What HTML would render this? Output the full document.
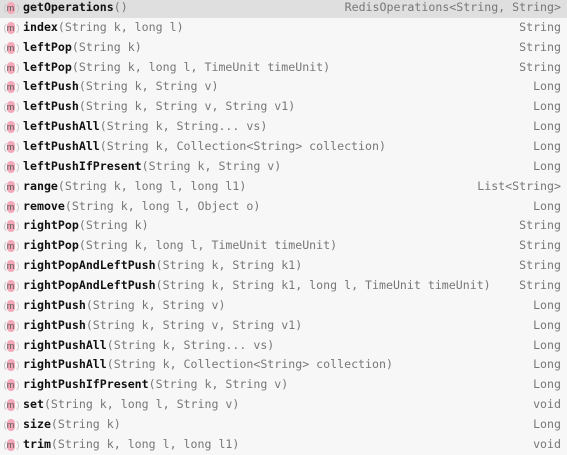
<!DOCTYPE html>
<html><head><style>
html,body{margin:0;padding:0;}
body{width:567px;height:454px;overflow:hidden;background:#f7f7f7;position:relative;font-family:"DejaVu Sans Mono","Liberation Mono",monospace;font-size:11.6px;}
.r{position:absolute;left:0;width:567px;height:19.86px;line-height:19.86px;white-space:pre;}
.r.sel{background:#dfdfdf;}
.ic{position:absolute;left:3px;top:4px;width:15px;height:12px;}
.ic .p{position:absolute;left:4px;top:0;width:8px;height:12px;border-radius:5px;background:#f4a9b9;}
.ic .b{position:absolute;left:1px;top:0;width:13px;height:11px;border:1px solid #c8c8c8;border-top-color:transparent;border-bottom-color:transparent;border-radius:7px;}
.ic .m{position:absolute;left:0;width:15px;top:0;text-align:center;font-size:9px;line-height:12px;color:#555;font-family:"Liberation Sans",sans-serif;}
.n{position:absolute;left:23px;top:0;color:#777;}
.n b{color:#111;font-weight:bold;}
.t{position:absolute;right:6px;top:0;color:#777;}
</style></head><body>
<div class="r sel" style="top:-2px"><div class="ic"><div class="b"></div><div class="p"></div><div class="m">m</div></div><span class="n"><b>getOperations</b>()</span><span class="t">RedisOperations&lt;String, String&gt;</span></div>
<div class="r" style="top:17.86px"><div class="ic"><div class="b"></div><div class="p"></div><div class="m">m</div></div><span class="n"><b>index</b>(String k, long l)</span><span class="t">String</span></div>
<div class="r" style="top:37.72px"><div class="ic"><div class="b"></div><div class="p"></div><div class="m">m</div></div><span class="n"><b>leftPop</b>(String k)</span><span class="t">String</span></div>
<div class="r" style="top:57.58px"><div class="ic"><div class="b"></div><div class="p"></div><div class="m">m</div></div><span class="n"><b>leftPop</b>(String k, long l, TimeUnit timeUnit)</span><span class="t">String</span></div>
<div class="r" style="top:77.44px"><div class="ic"><div class="b"></div><div class="p"></div><div class="m">m</div></div><span class="n"><b>leftPush</b>(String k, String v)</span><span class="t">Long</span></div>
<div class="r" style="top:97.3px"><div class="ic"><div class="b"></div><div class="p"></div><div class="m">m</div></div><span class="n"><b>leftPush</b>(String k, String v, String v1)</span><span class="t">Long</span></div>
<div class="r" style="top:117.16px"><div class="ic"><div class="b"></div><div class="p"></div><div class="m">m</div></div><span class="n"><b>leftPushAll</b>(String k, String... vs)</span><span class="t">Long</span></div>
<div class="r" style="top:137.02px"><div class="ic"><div class="b"></div><div class="p"></div><div class="m">m</div></div><span class="n"><b>leftPushAll</b>(String k, Collection&lt;String&gt; collection)</span><span class="t">Long</span></div>
<div class="r" style="top:156.88px"><div class="ic"><div class="b"></div><div class="p"></div><div class="m">m</div></div><span class="n"><b>leftPushIfPresent</b>(String k, String v)</span><span class="t">Long</span></div>
<div class="r" style="top:176.74px"><div class="ic"><div class="b"></div><div class="p"></div><div class="m">m</div></div><span class="n"><b>range</b>(String k, long l, long l1)</span><span class="t">List&lt;String&gt;</span></div>
<div class="r" style="top:196.6px"><div class="ic"><div class="b"></div><div class="p"></div><div class="m">m</div></div><span class="n"><b>remove</b>(String k, long l, Object o)</span><span class="t">Long</span></div>
<div class="r" style="top:216.46px"><div class="ic"><div class="b"></div><div class="p"></div><div class="m">m</div></div><span class="n"><b>rightPop</b>(String k)</span><span class="t">String</span></div>
<div class="r" style="top:236.32px"><div class="ic"><div class="b"></div><div class="p"></div><div class="m">m</div></div><span class="n"><b>rightPop</b>(String k, long l, TimeUnit timeUnit)</span><span class="t">String</span></div>
<div class="r" style="top:256.18px"><div class="ic"><div class="b"></div><div class="p"></div><div class="m">m</div></div><span class="n"><b>rightPopAndLeftPush</b>(String k, String k1)</span><span class="t">String</span></div>
<div class="r" style="top:276.04px"><div class="ic"><div class="b"></div><div class="p"></div><div class="m">m</div></div><span class="n"><b>rightPopAndLeftPush</b>(String k, String k1, long l, TimeUnit timeUnit)</span><span class="t">String</span></div>
<div class="r" style="top:295.9px"><div class="ic"><div class="b"></div><div class="p"></div><div class="m">m</div></div><span class="n"><b>rightPush</b>(String k, String v)</span><span class="t">Long</span></div>
<div class="r" style="top:315.76px"><div class="ic"><div class="b"></div><div class="p"></div><div class="m">m</div></div><span class="n"><b>rightPush</b>(String k, String v, String v1)</span><span class="t">Long</span></div>
<div class="r" style="top:335.62px"><div class="ic"><div class="b"></div><div class="p"></div><div class="m">m</div></div><span class="n"><b>rightPushAll</b>(String k, String... vs)</span><span class="t">Long</span></div>
<div class="r" style="top:355.48px"><div class="ic"><div class="b"></div><div class="p"></div><div class="m">m</div></div><span class="n"><b>rightPushAll</b>(String k, Collection&lt;String&gt; collection)</span><span class="t">Long</span></div>
<div class="r" style="top:375.34px"><div class="ic"><div class="b"></div><div class="p"></div><div class="m">m</div></div><span class="n"><b>rightPushIfPresent</b>(String k, String v)</span><span class="t">Long</span></div>
<div class="r" style="top:395.2px"><div class="ic"><div class="b"></div><div class="p"></div><div class="m">m</div></div><span class="n"><b>set</b>(String k, long l, String v)</span><span class="t">void</span></div>
<div class="r" style="top:415.06px"><div class="ic"><div class="b"></div><div class="p"></div><div class="m">m</div></div><span class="n"><b>size</b>(String k)</span><span class="t">Long</span></div>
<div class="r" style="top:434.92px"><div class="ic"><div class="b"></div><div class="p"></div><div class="m">m</div></div><span class="n"><b>trim</b>(String k, long l, long l1)</span><span class="t">void</span></div>
</body></html>
